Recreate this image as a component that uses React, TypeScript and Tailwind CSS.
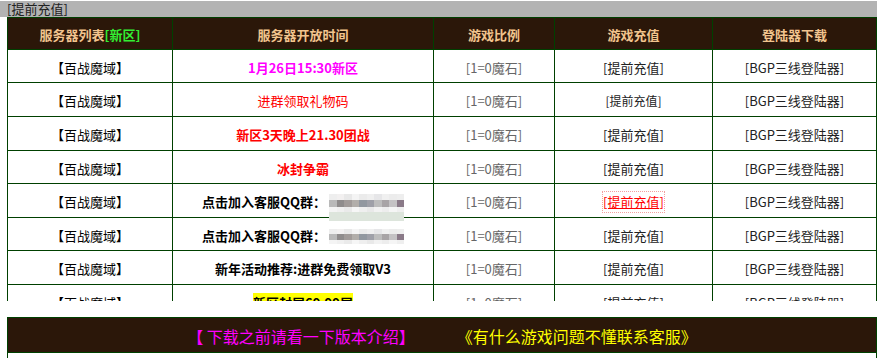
import React from 'react';

type Row = {
    time: React.ReactNode;
    charge?: React.ReactNode;
};

const cols = 'grid grid-cols-[165px_261px_121px_158px_164px]';
const cell = 'flex items-center justify-center border-r border-b border-[#004000] pt-[3px]';

const mosaicTop = ['#eeeeee', '#f2f0f0', '#e8e8e8', '#f4f4f4', '#ebebeb', '#efefef', '#e6e6e8', '#f0f0f0', '#ececec', '#eeeeee'];
const mosaicBand = ['#b9b9b9', '#8f8c8c', '#a19b99', '#b2aeaa', '#9298a0', '#9fa0a8', '#bdbdbd', '#a8a4a6', '#c4c2c4', '#8a7a88'];
const mosaicLow = ['#f4f4f4', '#f0f0f0', '#eaeaea', '#f6f6f6', '#efefef', '#e9e9e9', '#f2f2f2', '#ededed', '#f5f5f5', '#efefef'];

const Mosaic: React.FC<{ tall?: boolean }> = ({ tall }) => (
    <span className={`relative inline-flex w-[75px] flex-col overflow-hidden ${tall ? 'h-[27px] top-[5px]' : 'h-[16px] top-[1px]'}`}>
        <span className="grid grid-cols-10 h-[6px]">
            {mosaicTop.map((c, i) => <span key={i} style={{ background: c }} />)}
        </span>
        <span className="grid grid-cols-10 h-[7px]">
            {mosaicBand.map((c, i) => <span key={i} style={{ background: c }} />)}
        </span>
        <span className="grid grid-cols-10 h-[5px]">
            {mosaicLow.map((c, i) => <span key={i} style={{ background: c }} />)}
        </span>
        {tall && <span className="h-[9px] bg-[#dde5dc]" />}
    </span>
);

const rows: Row[] = [
    { time: <span className="font-bold text-[#ff00ff]">1月26日15:30新区</span> },
    { time: <span className="text-[#ff0000]">进群领取礼物码</span>, charge: <span className="text-[12px]">[提前充值]</span> },
    { time: <span className="font-bold text-[#ff0000]">新区3天晚上21.30团战</span> },
    { time: <span className="font-bold text-[#ff0000]">冰封争霸</span> },
    {
        time: (
            <span className="flex items-center gap-[3px] font-bold text-black">
                点击加入客服QQ群：<Mosaic tall />
            </span>
        ),
        charge: <span className="text-[#ff0000] underline outline-1 outline-dotted outline-[#f3a0a0]">[提前充值]</span>,
    },
    {
        time: (
            <span className="flex items-center gap-[3px] font-bold text-black">
                点击加入客服QQ群：<Mosaic />
            </span>
        ),
    },
    { time: <span className="font-bold text-black">新年活动推荐:进群免费领取V3</span> },
    { time: <span className="bg-[#ffff00] font-bold text-black">新区封层69.99层</span> },
];

const heights = ['h-[33px]', 'h-[34px]', 'h-[34px]', 'h-[33px]', 'h-[34px]', 'h-[33px]', 'h-[34px]', 'h-[34px]'];

const App: React.FC = () => {
    return (
        <div className="w-[889px] h-[358px] overflow-hidden bg-white text-[13px] text-black font-['Noto_Sans_CJK_SC',sans-serif]">
            <div className="mt-px h-4 w-[877px] bg-[#b3b3b3] pl-[7px] leading-4 text-[#222]">[提前充值]</div>

            {/* server list */}
            <div className="ml-[7px] h-[284px] w-[870px] overflow-hidden border-l border-t border-[#004000]">
                <div className={`${cols} h-[32px] bg-[#2b1709] font-bold text-[#f2c48e]`}>
                    <div className={cell}>
                        服务器列表<span className="text-[#33ee33]">[新区]</span>
                    </div>
                    <div className={cell}>服务器开放时间</div>
                    <div className={cell}>游戏比例</div>
                    <div className={cell}>游戏充值</div>
                    <div className={cell}>登陆器下载</div>
                </div>
                {rows.map((r, i) => (
                    <div key={i} className={`${cols} ${heights[i]}`}>
                        <div className={cell}>【百战魔域】</div>
                        <div className={cell}>{r.time}</div>
                        <div className={`${cell} text-[#666]`}>[1=0魔石]</div>
                        <div className={`${cell} text-[#222]`}>{r.charge ?? '[提前充值]'}</div>
                        <div className={`${cell} text-[#222]`}>[BGP三线登陆器]</div>
                    </div>
                ))}
            </div>

            {/* notice bar */}
            <div className="ml-[7px] mt-4 flex h-[36px] w-[870px] items-center justify-center gap-[42px] border border-[#004000] bg-[#2b1709] pt-[2px] text-[16px]">
                <span className="text-[#ff00ff]">【 下载之前请看一下版本介绍】</span>
                <span className="text-[#ffff00]">《有什么游戏问题不懂联系客服》</span>
            </div>
            <div className="ml-[7px] h-[10px] w-[870px] border-l border-r border-[#004000]" />
        </div>
    );
};

export default App;
